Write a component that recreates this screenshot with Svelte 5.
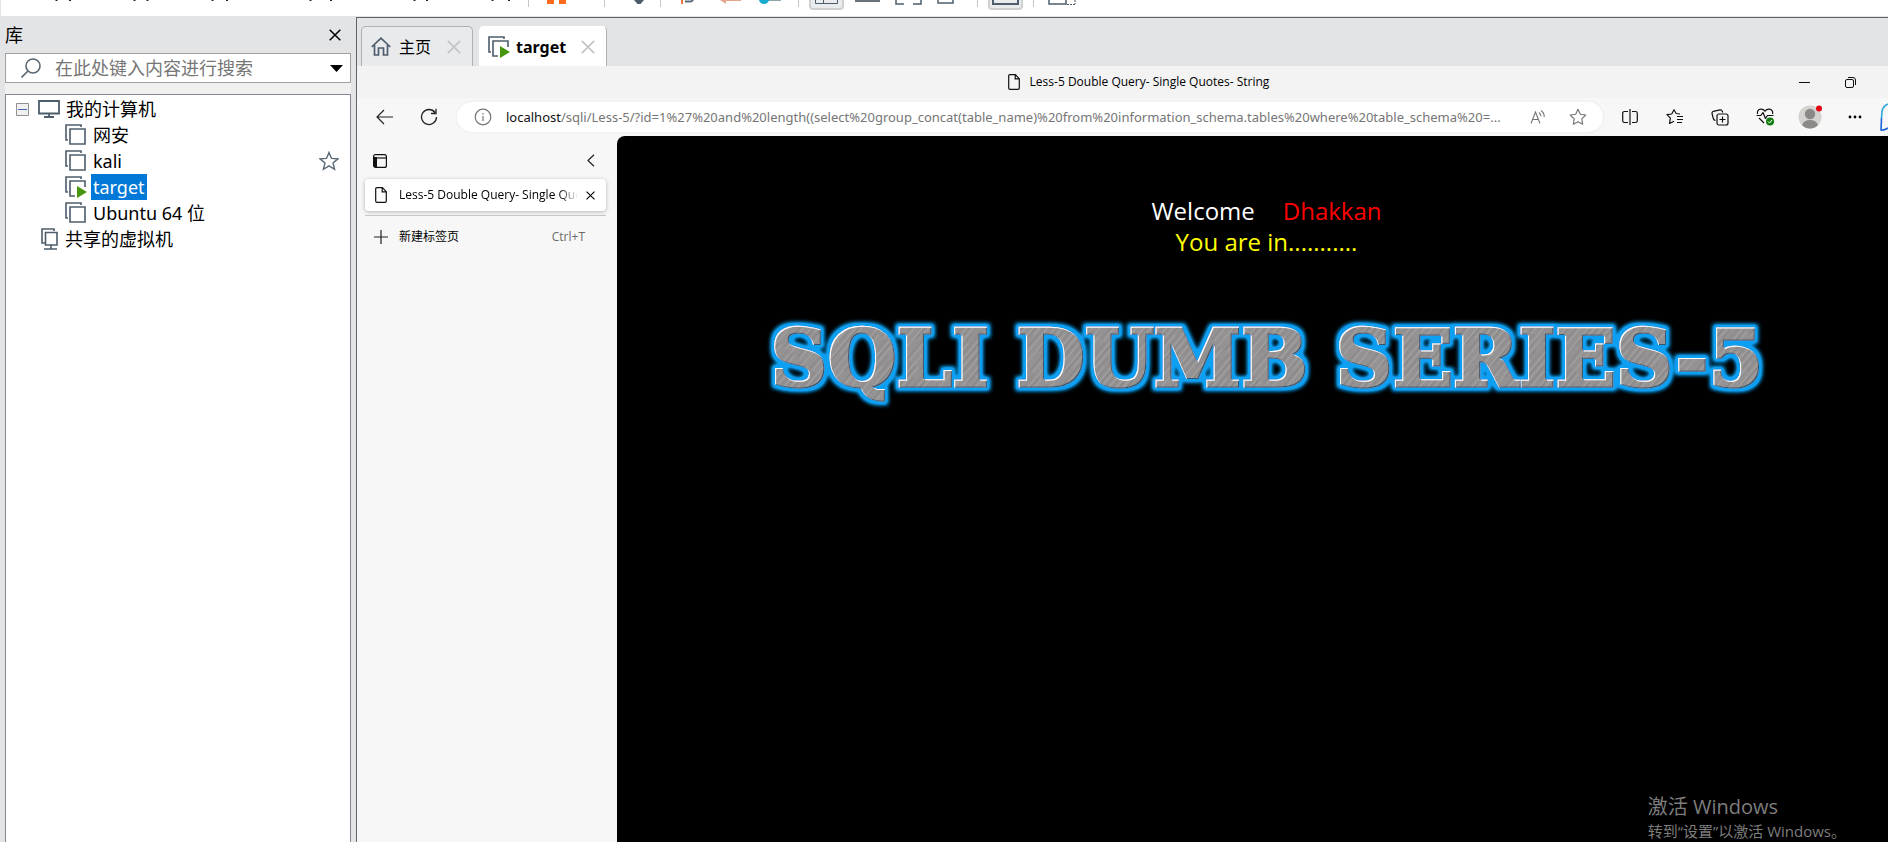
<script>
    let search = $state('');
    let selected = $state('target');

    const machines = [
        { name: '网安', running: false, starred: false },
        { name: 'kali', running: false, starred: true },
        { name: 'target', running: true, starred: false },
        { name: 'Ubuntu 64 位', running: false, starred: false }
    ];

    const title = 'Less-5 Double Query- Single Quotes- String';
    const host = 'localhost';
    const path = '/sqli/Less-5/?id=1%27%20and%20length((select%20group_concat(table_name)%20from%20information_schema.tables%20where%20table_schema%20=...';
</script>

{#snippet vmIcon(running)}
    <svg class="vm-icon" width="22" height="22" viewBox="0 0 22 22" fill="none" stroke="#4d5d6b" stroke-width="1.6">
        <path d="M16 3V1H1v15h2" />
        {#if running}
            <path d="M10 20H5V5h15v6" />
            <path d="M12 10l10 6-10 6z" fill="#46960f" stroke="none" />
        {:else}
            <path d="M5 5h15v15H5z" />
        {/if}
    </svg>
{/snippet}

{#snippet pageIcon()}
    <svg width="12" height="16" viewBox="0 0 12 16" fill="none" stroke="#111" stroke-width="1.2">
        <path d="M2 .7h5.4l3.9 4v9.3q0 1.3-1.3 1.3H2q-1.3 0-1.3-1.3V2Q.7.7 2 .7zM7.2.9v4h4" />
    </svg>
{/snippet}

{#snippet cross(size)}
    <svg width={size} height={size} viewBox="0 0 12 12" fill="none" stroke="currentColor" stroke-width="1.5">
        <path d="M.7.7l10.6 10.6M11.3.7L.7 11.3" />
    </svg>
{/snippet}

<div class="window">
    <div class="menubar">
        <svg width="1100" height="16" viewBox="0 0 1100 16" fill="none">
            <path d="M55.500 .5h2M69 .5h2M133.500 .5h2M146.500 .5h2M211.500 .5h2M226 .5h2M309.500 .5h2M330 .5h2M413.500 .5h2M426 .5h2M491.500 .5h2M508 .5h2" stroke="#222" />
            <path d="M528.500 0v7M604.500 0v7M660.500 0v7M798.500 0v7M977.500 0v7M1033.500 0v7" stroke="#c4c4c4" />
            <path d="M547 0h7v4h-7zM559 0h7v4h-7z" fill="#ff6a1f" />
            <path d="M634 0h10l-3.500 4h-3z" fill="#4a5c6b" />
            <path d="M682 0v4" stroke="#e8763c" stroke-width="2" />
            <path d="M685 1.500h5q2 0 3-1.500" stroke="#5b6b7c" stroke-width="2" />
            <path d="M720 0h21v1h-15v3z" fill="#e3a48c" />
            <path d="M768 .5h13" stroke="#91a5ad" />
            <path d="M759 0h10q-1 4-5 4t-5-4z" fill="#16acd0" />
            <path d="M810 0v6q0 3 3 3h27q3 0 3-3V0M989 0v6q0 3 3 3h27q3 0 3-3V0" fill="#e9ebec" stroke="#cfd0d0" stroke-width="2" />
            <path d="M815.500 0v3.500h22V0M823.500 0v3.500" stroke="#4d5d6b" />
            <path d="M855 0h25v2h-25z" fill="#6c747b" />
            <path d="M896 0v4h8M921 0v4h-8M938 0v3h15V0" stroke="#4d5d6b" stroke-width="1.500" />
            <path d="M993 0v4h25V0" stroke="#4d5d6b" stroke-width="2" />
            <path d="M1049 0v4h17V0" stroke="#4d5d6b" stroke-width="1.500" />
            <path d="M1067 4.500h9M1075 0v4" stroke="#4d5d6b" stroke-dasharray="2 1" />
        </svg>
    </div>

    <div class="workspace">
        <aside class="library">
            <header>
                <span>库</span>
                <button aria-label="关闭">{@render cross(12)}</button>
            </header>
            <div class="search">
                <svg width="20" height="20" viewBox="0 0 20 20" fill="none" stroke="#5a6873" stroke-width="1.600">
                    <circle cx="12" cy="8" r="7" />
                    <path d="M7 13l-6.500 6.500" />
                </svg>
                <input type="text" aria-label="搜索" placeholder="在此处键入内容进行搜索" bind:value={search} />
                <button aria-label="展开">
                    <svg width="13" height="7" viewBox="0 0 13 7"><path d="M0 0h13L6.500 7z" /></svg>
                </button>
            </div>
            <div class="tree">
                <div class="row root">
                    <button class="toggle" aria-label="折叠">
                        <svg width="13" height="13" viewBox="0 0 13 13" fill="#f0f0f0" stroke="#919191">
                            <path d="M.5.5h12v12H.5z" />
                            <path d="M2 6.500h9" stroke="#4763b0" />
                        </svg>
                    </button>
                    <svg width="22" height="18" viewBox="0 0 22 18" fill="none" stroke="#4d5d6b" stroke-width="1.800">
                        <path d="M1 1h20v12.500H1zM11 13.500V17M6 17h10" />
                    </svg>
                    <span class="name">我的计算机</span>
                </div>
                {#each machines as vm}
                    <div class="row child">
                        {@render vmIcon(vm.running)}
                        <button class="name" class:selected={selected === vm.name} onclick={() => selected = vm.name}>{vm.name}</button>
                        {#if vm.starred}
                            <svg class="star" width="20" height="20" viewBox="0 0 20 20" fill="none" stroke="#5a6873" stroke-width="1.400">
                                <path d="M10 1.500l2.500 5.900 6.400.5-4.900 4.100 1.600 6.300L10 14.900l-5.600 3.400L6 12 1.100 7.900l6.400-.5z" />
                            </svg>
                        {/if}
                    </div>
                {/each}
                <div class="row shared">
                    <svg width="18" height="22" viewBox="0 0 18 22" fill="none" stroke="#4d5d6b" stroke-width="1.600">
                        <path d="M13 3V1H1v14h3M4.500 4.500H16V17H4.500zM10 17v4M3 21h13" />
                    </svg>
                    <span class="name">共享的虚拟机</span>
                </div>
            </div>
        </aside>

        <main class="panel">
            <nav class="vm-tabs">
                <div class="vm-tab">
                    <svg width="20" height="19" viewBox="0 0 20 19" fill="none" stroke="#4d5d6b" stroke-width="1.700">
                        <path d="M.7 10L10 1.200 19.300 10M3.500 8v10h4v-7h5v7h4V8" />
                    </svg>
                    <button class="label">主页</button>
                    <button class="close" aria-label="关闭主页">{@render cross(14)}</button>
                </div>
                <div class="vm-tab active">
                    {@render vmIcon(true)}
                    <button class="label">target</button>
                    <button class="close" aria-label="关闭 target">{@render cross(14)}</button>
                </div>
            </nav>

            <div class="titlebar">
                <div class="title">
                    {@render pageIcon()}
                    <span>{title}</span>
                </div>
                <button aria-label="最小化">
                    <svg width="11" height="11" viewBox="0 0 11 11" stroke="#111"><path d="M0 5.500h11" /></svg>
                </button>
                <button aria-label="还原">
                    <svg width="11" height="11" viewBox="0 0 11 11" fill="none" stroke="#111">
                        <rect x=".5" y="2.500" width="8" height="8" rx="1.500" />
                        <path d="M3 .5h5q2.500 0 2.500 2.500v5" />
                    </svg>
                </button>
            </div>

            <div class="toolbar">
                <button class="nav" aria-label="后退">
                    <svg width="18" height="16" viewBox="0 0 18 16" fill="none" stroke="#222" stroke-width="1.200"><path d="M17 8H1M8 1L1 8l7 7" /></svg>
                </button>
                <button class="nav" aria-label="刷新">
                    <svg width="18" height="18" viewBox="0 0 18 18" fill="none" stroke="#222" stroke-width="1.300"><path d="M16.500 9A7.500 7.500 0 1 1 15 4.500M16 .8V5.500h-5" /></svg>
                </button>
                <div class="address">
                    <svg width="18" height="18" viewBox="0 0 18 18" fill="none" stroke="#767676" stroke-width="1.200">
                        <circle cx="9" cy="9" r="7.800" />
                        <path d="M9 8v5M9 5v1.400" />
                    </svg>
                    <a class="url" href="#url"><b>{host}</b>{path}</a>
                    <button aria-label="朗读">
                        <svg width="16" height="16" viewBox="0 0 16 16" fill="none" stroke="#767676" stroke-width="1.100">
                            <path d="M1 14.500L5.500 3 10 14.500M2.500 10.500h6M9 3.500q2 1.500 2 3.800M11 1.500q3.500 2.500 3.200 6.500" />
                        </svg>
                    </button>
                    <button aria-label="收藏">
                        <svg width="18" height="18" viewBox="0 0 20 20" fill="none" stroke="#767676" stroke-width="1.300" stroke-linejoin="round">
                            <path d="M10 1.500l2.600 5.400 6 .9-4.400 4.200 1 6L10 15.200 4.800 18l1-6L1.400 7.800l6-.9z" />
                        </svg>
                    </button>
                </div>
                <div class="actions">
                    <button aria-label="分屏">
                        <svg width="16" height="16" viewBox="0 0 16 16" fill="none" stroke="#111" stroke-width="1.200">
                            <path d="M6 2.500H2.500Q.7 2.500.7 4.300v7.400q0 1.800 1.800 1.800H6M10 2.500h3.500q1.800 0 1.800 1.800v7.400q0 1.800-1.800 1.800H10M8 0v16" />
                        </svg>
                    </button>
                    <button aria-label="收藏夹">
                        <svg width="18" height="16" viewBox="0 0 18 16" fill="none" stroke="#111" stroke-width="1.200" stroke-linejoin="round">
                            <path d="M14 5l-3.800-.5L8 .8 5.700 5 .9 5.700l3.500 3.500-.9 5.300L8 12.300M11 7.500h6M11 10.500h6M11 13.500h5" />
                        </svg>
                    </button>
                    <button aria-label="集锦">
                        <svg width="18" height="17" viewBox="0 0 18 17" fill="none" stroke="#111" stroke-width="1.200">
                            <path d="M4.500 11.500Q2.800 11.300 2.300 9.500L1 4.500Q.8 2.800 2.300 2.300L9 .9q1.800-.3 2.300 1.400l.4 1.200" />
                            <rect x="6" y="5" width="11" height="11" rx="2" />
                            <path d="M11.500 7.500v6M8.500 10.500h6" />
                        </svg>
                    </button>
                    <button aria-label="浏览器概要">
                        <svg width="18" height="18" viewBox="0 0 18 18" fill="none" stroke="#111" stroke-width="1.200" stroke-linejoin="round">
                            <path d="M1.500 6Q.8 1.500 4.800 1.200 7.300 1 9 3.200 10.700 1 13.200 1.200 17.200 1.500 16.700 6M.5 7.500h4.300L7 4.500l2.500 6 2-3h6M3 10l5 5" />
                            <circle cx="14" cy="13.500" r="4" fill="#107c10" stroke="none" />
                            <path d="M12 13.500l1.500 1.500 2.500-3" stroke="#fff" stroke-width="1" />
                        </svg>
                    </button>
                    <button aria-label="个人资料">
                        <svg width="24" height="24" viewBox="0 0 24 24">
                            <circle cx="12" cy="12" r="11.500" fill="#d5d3d0" />
                            <circle cx="12" cy="9" r="5.200" fill="#8b8885" />
                            <path d="M4 20q2-5 8-5t8 5q-3.500 3.500-8 3.500T4 20z" fill="#8b8885" />
                            <circle cx="21" cy="3.500" r="3" fill="#e60012" />
                        </svg>
                    </button>
                    <button aria-label="更多">
                        <svg width="14" height="4" viewBox="0 0 14 4"><circle cx="2" cy="2" r="1.400" /><circle cx="7" cy="2" r="1.400" /><circle cx="12" cy="2" r="1.400" /></svg>
                    </button>
                    <button class="copilot" aria-label="Copilot">
                        <svg width="8" height="30" viewBox="0 0 8 30" fill="none" stroke-width="1.600">
                            <path d="M8 2Q3 4 2 9.500L1.500 16" stroke="#2aa7dd" />
                            <path d="M1.500 16L1 28q3 .5 7-2" stroke="#1b64d4" />
                        </svg>
                    </button>
                </div>
            </div>

            <div class="browser">
                <aside class="side-tabs">
                    <div class="side-head">
                        <button aria-label="标签页操作">
                            <svg width="14" height="14" viewBox="0 0 14 14" fill="none" stroke="#111" stroke-width="1.200">
                                <rect x=".6" y=".6" width="12.800" height="12.800" rx="2" />
                                <path d="M4 4h9.500" />
                                <path d="M1 3h3v10H1z" fill="#111" stroke="none" />
                            </svg>
                        </button>
                        <button aria-label="折叠窗格">
                            <svg width="8" height="13" viewBox="0 0 8 13" fill="none" stroke="#222" stroke-width="1.200"><path d="M7 .7L1 6.500l6 5.800" /></svg>
                        </button>
                    </div>
                    <div class="side-tab">
                        {@render pageIcon()}
                        <span>{title}</span>
                        <button aria-label="关闭标签页">{@render cross(9)}</button>
                    </div>
                    <button class="new-tab">
                        <svg width="14" height="14" viewBox="0 0 14 14" stroke="#222" stroke-width="1.200"><path d="M0 7h14M7 0v14" /></svg>
                        <span>新建标签页</span>
                        <kbd>Ctrl+T</kbd>
                    </button>
                </aside>

                <section class="page">
                    <p class="welcome">Welcome<span>Dhakkan</span></p>
                    <p class="result">You are in...........</p>
                    <svg class="banner" width="1060" height="110" viewBox="0 0 1060 110">
                        <defs>
                            <pattern id="steel" width="17" height="70" patternUnits="userSpaceOnUse" patternTransform="rotate(40)">
                                <rect width="17" height="70" fill="#949292" />
                                <path d="M2.500 0v70M7.500 0v40M13.500 20v50" stroke="#a9a7a6" stroke-width=".8" />
                                <path d="M4.500 0v50M10.500 10v60M16 0v30" stroke="#858382" stroke-width=".8" />
                            </pattern>
                            <filter id="glow" x="-5%" y="-20%" width="110%" height="140%">
                                <feMorphology in="SourceAlpha" operator="dilate" radius="3" result="fat" />
                                <feGaussianBlur in="fat" stdDeviation="2" result="soft" />
                                <feComponentTransfer in="soft" result="halo">
                                    <feFuncA type="linear" slope="1.600" />
                                </feComponentTransfer>
                                <feFlood flood-color="#0a9ff2" />
                                <feComposite in2="halo" operator="in" result="blue" />
                                <!-- light edge on the top left, dark edge on the bottom right -->
                                <feOffset in="SourceAlpha" dx="1" dy="1" result="low" />
                                <feFlood flood-color="#fff" />
                                <feComposite in2="SourceAlpha" operator="in" />
                                <feComposite in2="low" operator="out" result="light" />
                                <feOffset in="SourceAlpha" dx="-1" dy="-1" result="high" />
                                <feFlood flood-color="#36546a" />
                                <feComposite in2="SourceAlpha" operator="in" />
                                <feComposite in2="high" operator="out" result="dark" />
                                <feMerge>
                                    <feMergeNode in="blue" />
                                    <feMergeNode in="SourceGraphic" />
                                    <feMergeNode in="dark" />
                                    <feMergeNode in="light" />
                                </feMerge>
                            </filter>
                        </defs>
                        <text x="530" y="79" text-anchor="middle" filter="url(#glow)">SQLI DUMB SERIES-5</text>
                    </svg>
                    <div class="activate">
                        <p>激活 Windows</p>
                        <p>转到“设置”以激活 Windows。</p>
                    </div>
                </section>
            </div>
        </main>
    </div>
</div>

<style>
    :global(body) {
        margin: 0;
        overflow: hidden;
    }

    .window {
        display: flex;
        flex-direction: column;
        height: 100vh;
        background: #e3e4e6;
        color: #000;
        font-family: "Noto Sans", "Noto Sans CJK SC", sans-serif;
        font-size: 18px;
        line-height: 26px;
    }

    button {
        display: flex;
        align-items: center;
        justify-content: center;
        padding: 0;
        border: none;
        background: none;
        color: inherit;
        font: inherit;
    }

    svg {
        display: block;
        flex: none;
    }

    p {
        margin: 0;
    }

    .menubar {
        flex: none;
        height: 16px;
        overflow: hidden;
        margin-left: 1px;
        background: #fff;
    }

    .menubar svg {
        margin-left: -1px;
    }

    .workspace {
        display: flex;
        flex: 1;
        min-height: 0;
        padding-top: 1px;
    }

    /* library */
    .library {
        display: flex;
        flex-direction: column;
        flex: none;
        width: 346px;
        padding: 0 5px;
    }

    .library header {
        display: flex;
        justify-content: space-between;
        align-items: center;
        height: 36px;
        padding-right: 10px;
    }

    .search {
        display: flex;
        align-items: center;
        box-sizing: border-box;
        height: 30px;
        padding: 0 7px 0 15px;
        border: 1px solid #a0a0a0;
        background: #fff;
    }

    .search input {
        flex: 1;
        min-width: 0;
        padding: 0 0 0 14px;
        border: none;
        outline: none;
        background: none;
        font: inherit;
    }

    .search input::placeholder {
        color: #767676;
    }

    .tree {
        flex: 1;
        margin-top: 11px;
        padding-top: 1px;
        border: 1px solid #828790;
        border-bottom: none;
        background: #fff;
        box-shadow: 0 -11px #f0f0f0;
    }

    .row {
        display: flex;
        align-items: center;
        height: 26px;
        gap: 4px;
    }

    .root {
        padding-left: 10px;
    }

    .toggle {
        margin-right: 5px;
    }

    .child {
        padding: 0 11px 0 59px;
    }

    .shared {
        padding-left: 35px;
    }

    .name {
        padding: 0 2px;
    }

    .selected {
        background: #0078d7;
        color: #fff;
    }

    .star {
        margin-left: auto;
    }

    /* virtual machine tabs */
    .panel {
        display: flex;
        flex-direction: column;
        flex: 1;
        min-width: 0;
        border-top: 1px solid #606468;
        border-left: 1px solid #606468;
    }

    .vm-tabs {
        display: flex;
        gap: 6px;
        padding: 8px 4px 0;
    }

    .vm-tab {
        display: flex;
        align-items: center;
        box-sizing: border-box;
        height: 40px;
        padding: 0 11px 0 9px;
        border: 1px solid #aeb0b2;
        border-bottom: none;
        border-radius: 5px 5px 0 0;
        background: #e9eaec;
    }

    .vm-tab.active {
        padding-left: 8px;
        border-left-color: #fff;
        border-top-color: #fff;
        background: #fff;
        font-weight: bold;
    }

    .label {
        margin-left: 8px;
        font-size: 16px;
    }

    .active .label {
        margin-left: 6px;
    }

    .close {
        margin-left: 16px;
        color: #c4c5c6;
    }

    .active .close {
        margin-left: 15px;
    }

    /* browser chrome */
    .titlebar {
        display: flex;
        align-items: center;
        height: 32px;
        padding-right: 15px;
        background: #f3f3f3;
        font-family: "Open Sans", sans-serif;
        font-size: 12px;
        line-height: 16px;
    }

    .title {
        display: flex;
        flex: 1;
        justify-content: center;
        gap: 10px;
        padding-left: 139px;
    }

    .titlebar button {
        width: 46px;
        height: 32px;
    }

    .toolbar {
        display: flex;
        align-items: center;
        height: 38px;
        padding-left: 6px;
        background: #f7f7f7;
    }

    .nav {
        width: 44px;
        height: 32px;
    }

    .address {
        display: flex;
        align-items: center;
        flex: 1;
        min-width: 0;
        box-sizing: border-box;
        height: 30px;
        margin: 0 4px 0 6px;
        padding: 0 5px 0 17px;
        border-radius: 15px;
        background: #fff;
        box-shadow: 0 0 3px #e4e4e4;
    }

    .address button {
        width: 40px;
        height: 30px;
    }

    .url {
        flex: 1;
        min-width: 0;
        margin-left: 14px;
        overflow: hidden;
        color: #767676;
        font-size: 13px;
        line-height: 20px;
        text-decoration: none;
        white-space: nowrap;
    }

    .url b {
        color: #111;
        font-weight: normal;
    }

    .actions {
        display: flex;
    }

    .actions button {
        width: 45px;
        height: 30px;
    }

    .actions .copilot {
        justify-content: flex-end;
        width: 11px;
    }

    .browser {
        display: flex;
        flex: 1;
        min-height: 0;
        background: #f7f7f7;
    }

    .side-tabs {
        flex: none;
        box-sizing: border-box;
        width: 260px;
        padding: 0 11px 0 8px;
        font-family: "Open Sans", "Noto Sans CJK SC", sans-serif;
        font-size: 12px;
        line-height: 20px;
    }

    .side-head {
        display: flex;
        justify-content: space-between;
        height: 43px;
        padding: 6px 11px 0 8px;
        box-sizing: border-box;
    }

    .side-tab {
        display: flex;
        align-items: center;
        height: 32px;
        padding: 0 11px 0 10px;
        border-radius: 4px;
        background: #fff;
        box-shadow: 0 1px 4px #b4b4b4;
    }

    .side-tab span {
        flex: 1;
        min-width: 0;
        margin: 0 8px 0 12px;
        overflow: hidden;
        white-space: nowrap;
        mask-image: linear-gradient(to right, #000 160px, transparent);
    }

    .new-tab {
        box-sizing: border-box;
        width: 100%;
        height: 42px;
        margin-top: 4px;
        padding: 0 21px 0 9px;
        border-top: 1px solid #c6c6c6;
    }

    .new-tab span {
        margin: 0 auto 0 11px;
    }

    kbd {
        color: #6b6b6b;
        font: inherit;
    }

    /* rendered page */
    .page {
        position: relative;
        flex: 1;
        min-width: 0;
        box-sizing: border-box;
        padding: 59px 0 0 28px;
        overflow: hidden;
        border-radius: 8px 0 0 0;
        background: #000;
        color: #fff;
        font-family: "Open Sans", "Noto Sans CJK SC", sans-serif;
        font-size: 24px;
        line-height: 31px;
        text-align: center;
    }

    .welcome span {
        margin-left: 28px;
        color: #f00;
    }

    .result {
        color: #ff0;
    }

    .banner {
        margin: 50px auto 0;
    }

    .banner text {
        fill: url(#steel);
        stroke: url(#steel);
        stroke-width: 3px;
        font-family: "DejaVu Serif", serif;
        font-size: 79px;
        font-weight: bold;
    }

    /* system watermark floating over the desktop */
    .activate {
        position: absolute;
        right: 42px;
        bottom: 0;
        color: #7d7d7d;
        font-size: 15px;
        line-height: 22px;
        text-align: left;
    }

    .activate p:first-child {
        font-size: 20px;
        line-height: 26px;
    }
</style>
